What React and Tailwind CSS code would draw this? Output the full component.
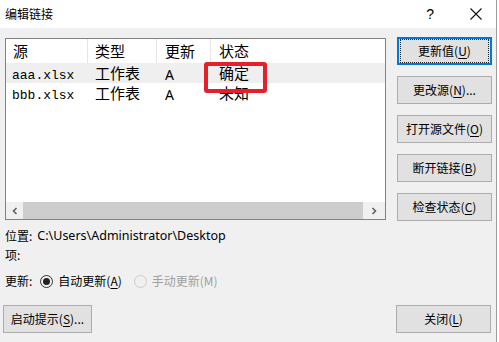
import React from "react";

const ui = { fontFamily: '"Noto Sans", "Noto Sans CJK SC", sans-serif' };
const cjk = { fontFamily: '"Noto Sans CJK SC", sans-serif' };
const mono = { fontFamily: '"Liberation Mono", "Noto Sans CJK SC", monospace' };

function Btn({ children, focused, className = "" }) {
  return (
    <div
      className={
        "h-[28px] flex items-center justify-center text-[12px] text-[#000] bg-[#e1e1e1] " +
        (focused ? "border-2 border-[#0078d7] " : "border border-[#adadad] ") +
        className
      }
      style={ui}
    >
      {focused ? (
        <div className="w-full h-full m-[1px] border border-dotted border-[#222] flex items-center justify-center">
          {children}
        </div>
      ) : (
        children
      )}
    </div>
  );
}

function U({ children }) {
  return <span className="underline underline-offset-2">{children}</span>;
}

export default function App() {
  return (
    <div className="w-[499px] h-[342px] bg-white overflow-hidden">
      <div className="w-[497px] h-[342px] bg-[#f0f0f0] border-r border-[#9c9c9c] relative" style={ui}>
        {/* title bar */}
        <div className="h-[28px] bg-white flex items-center pl-[5px] pr-[12px]">
          <span className="text-[12px] text-black" style={cjk}>编辑链接</span>
          <div className="flex-1" />
          <span className="text-[14px] text-black mr-[36px]" style={{ fontFamily: '"Liberation Sans", sans-serif' }}>?</span>
          <svg width="12" height="12" viewBox="0 0 12 12" className="mr-[2px]">
            <path d="M0.5 0.5 L11.5 11.5 M11.5 0.5 L0.5 11.5" stroke="#111" strokeWidth="1.1" />
          </svg>
        </div>

        {/* main */}
        <div className="flex pl-[5px] pt-[10px]">
          <div className="flex flex-col w-[381px]">
            {/* list */}
            <div className="relative h-[182px] bg-white border border-[#828282] flex flex-col">
              <div className="flex h-[24px] items-center text-[15px] text-black" style={cjk}>
                <div className="w-[82px] h-full flex items-center pl-[7px] border-r border-[#e5e5e5]">源</div>
                <div className="w-[69px] h-full flex items-center pl-[7px] border-r border-[#e5e5e5]">类型</div>
                <div className="w-[54px] h-full flex items-center pl-[8px] border-r border-[#e5e5e5]">更新</div>
                <div className="flex-1 h-full flex items-center pl-[8px]">状态</div>
              </div>
              {[
                ["aaa.xlsx", "工作表", "A", "确定", true],
                ["bbb.xlsx", "工作表", "A", "未知", false],
              ].map(([a, b, c, d, hl]) => (
                <div key={a} className={"flex h-[20px] items-center text-black " + (hl ? "bg-[#efefef]" : "")}>
                  <div className="w-[82px] pl-[6px] pt-[5px] text-[13px] leading-[15px]" style={mono}>{a}</div>
                  <div className="w-[69px] pl-[7px] text-[15px]" style={cjk}>{b}</div>
                  <div className="w-[54px] pl-[8px] pt-[2px] text-[14px]" style={ui}>{c}</div>
                  <div className="flex-1 pl-[8px] text-[15px]" style={cjk}>{d}</div>
                </div>
              ))}
              <div className="flex-1" />
              {/* horizontal scrollbar */}
              <div className="h-[17px] bg-[#f0f0f0] flex items-center">
                <div className="w-[17px] h-full flex items-center justify-center">
                  <svg width="8" height="8" viewBox="0 0 8 8">
                    <path d="M5.5 1 L2.5 4 L5.5 7" fill="none" stroke="#606060" strokeWidth="1.6" />
                  </svg>
                </div>
                <div className="flex-1 h-full bg-[#cdcdcd] mx-0" />
                <div className="w-[22px] h-full flex items-center justify-center">
                  <svg width="8" height="8" viewBox="0 0 8 8">
                    <path d="M2.5 1 L5.5 4 L2.5 7" fill="none" stroke="#606060" strokeWidth="1.6" />
                  </svg>
                </div>
              </div>
              {/* red annotation */}
              <div className="absolute left-[198px] top-[23px] w-[63px] h-[31px] border-[4px] border-[#e3202c] rounded-[3px]" />
            </div>

            <div className="mt-[8px] h-[16px] flex items-center text-[12px] text-black">
              <span style={cjk}>位置:</span>
              <span className="ml-[5px] text-[12.5px]">C:\Users\Administrator\Desktop</span>
            </div>
            <div className="mt-[3px] h-[16px] flex items-center text-[12px] text-black" style={cjk}>项:</div>
            <div className="mt-[10px] h-[16px] flex items-center text-[12px] text-black" style={cjk}>
              <span>更新:</span>
              <span className="ml-[8px] w-[13px] h-[13px] rounded-full border border-[#333] flex items-center justify-center">
                <span className="w-[7px] h-[7px] rounded-full bg-[#222]" />
              </span>
              <span className="ml-[5px]">自动更新(<U>A</U>)</span>
              <span className="ml-[12px] w-[13px] h-[13px] rounded-full border border-[#cccccc]" />
              <span className="ml-[5px] text-[#a0a0a0]">手动更新(M)</span>
            </div>
          </div>

          <div className="ml-[11px] -mt-[1px] w-[95px] flex flex-col gap-[11px]">
            <Btn focused><span style={cjk}>更新值(<U>U</U>)</span></Btn>
            <Btn><span style={cjk}>更改源(<U>N</U>)...</span></Btn>
            <Btn><span style={cjk}>打开源文件(<U>O</U>)</span></Btn>
            <Btn><span style={cjk}>断开链接(<U>B</U>)</span></Btn>
            <Btn><span style={cjk}>检查状态(<U>C</U>)</span></Btn>
          </div>
        </div>

        {/* bottom */}
        <div className="flex mt-[16px] pl-[3px]">
          <Btn className="w-[89px]"><span style={cjk}>启动提示(<U>S</U>)...</span></Btn>
          <div className="flex-1" />
          <Btn className="w-[95px] mr-[5px]"><span style={cjk}>关闭(<U>L</U>)</span></Btn>
        </div>
      </div>
    </div>
  );
}
